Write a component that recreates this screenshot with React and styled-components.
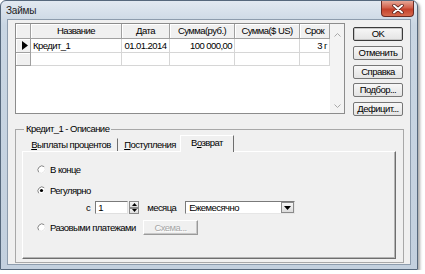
import React from "react";
import styled, { createGlobalStyle } from "styled-components";

const GlobalStyle = createGlobalStyle`
  body {
    margin: 0;
    background: #ffffff;
    font-family: "Liberation Sans", Arial, sans-serif;
    font-size: 9.5px;
    letter-spacing: -0.55px;
    color: #000;
  }
`;

const columns = [
  { title: "", width: 15 },
  { title: "Название", width: 91 },
  { title: "Дата", width: 48 },
  { title: "Сумма(руб.)", width: 65 },
  { title: "Сумма($ US)", width: 65 },
  { title: "Срок", width: 30 },
];
const template = columns.map((c) => c.width + "px").join(" ");

const rows = [
  { cells: ["Кредит_1", "01.01.2014", "100 000,00", "", "3 г"], current: true, height: 14 },
  { cells: ["", "", "", "", ""], current: false, height: 13 },
];
const aligns = ["left", "center", "right", "right", "right"];

const LoanDialog = () => {
  return (
    <Window>
      <TitleBar>
        <Title>Займы</Title>
        <CloseButton>
          <svg width="12" height="10" viewBox="0 0 12 10">
            <path d="M2 1.5 L10 8.5 M10 1.5 L2 8.5" stroke="#4a1410" strokeWidth="3.4" strokeLinecap="round" />
            <path d="M2 1.5 L10 8.5 M10 1.5 L2 8.5" stroke="#ffffff" strokeWidth="2" strokeLinecap="round" />
          </svg>
        </CloseButton>
      </TitleBar>

      <Client>
        <TopRow>
          <Grid>
            <Table>
              <HeadRow>
                {columns.map((c, i) => (
                  <HeadCell key={i}>{c.title}</HeadCell>
                ))}
              </HeadRow>
              {rows.map((r, i) => (
                <DataRow key={i} $height={r.height}>
                  <Indicator>
                    {r.current && (
                      <svg width="6" height="9" viewBox="0 0 6 9">
                        <path d="M0 0 L6 4.5 L0 9 Z" fill="#000" />
                      </svg>
                    )}
                  </Indicator>
                  {r.cells.map((t, j) => (
                    <Cell key={j} $align={aligns[j]}>{t}</Cell>
                  ))}
                </DataRow>
              ))}
            </Table>
            <ScrollTrack>
              <svg width="7" height="4" viewBox="0 0 7 4">
                <path d="M0.5 3.5 L3.5 0.5 L6.5 3.5" fill="none" stroke="#a8a8a8" />
              </svg>
              <svg width="7" height="4" viewBox="0 0 7 4">
                <path d="M0.5 0.5 L3.5 3.5 L6.5 0.5" fill="none" stroke="#a8a8a8" />
              </svg>
            </ScrollTrack>
          </Grid>

          <ButtonColumn>
            <Button $default>OK</Button>
            <Button>Отменить</Button>
            <Button>Справка</Button>
            <Button>Подбор...</Button>
            <Button>Дефицит...</Button>
          </ButtonColumn>
        </TopRow>

        <GroupBox>
          <Legend>Кредит_1 - Описание</Legend>
          <TabStrip>
            <Tab $width={94} $separator>
              <u>В</u>ыплаты процентов
            </Tab>
            <Tab $width={64}>
              <u>П</u>оступления
            </Tab>
            <Tab $width={54} $active>
              В<u>о</u>зврат
            </Tab>
          </TabStrip>

          <TabPanel>
            <RadioRow>
              <Radio />
              <span>В конце</span>
            </RadioRow>
            <RadioRow $top={9}>
              <Radio checked />
              <span>Регулярно</span>
            </RadioRow>
            <PeriodRow>
              <span>с</span>
              <SpinBox>
                <Edit>1</Edit>
                <SpinButtons>
                  <SpinHalf>
                    <svg width="5" height="3" viewBox="0 0 5 3">
                      <path d="M0 3 L2.5 0 L5 3 Z" fill="#000" />
                    </svg>
                  </SpinHalf>
                  <SpinHalf>
                    <svg width="5" height="3" viewBox="0 0 5 3">
                      <path d="M0 0 L2.5 3 L5 0 Z" fill="#000" />
                    </svg>
                  </SpinHalf>
                </SpinButtons>
              </SpinBox>
              <MonthLabel>месяца</MonthLabel>
              <Combo>
                <ComboText>Ежемесячно</ComboText>
                <ComboButton>
                  <svg width="7" height="4" viewBox="0 0 7 4">
                    <path d="M0 0 L7 0 L3.5 4 Z" fill="#000" />
                  </svg>
                </ComboButton>
              </Combo>
            </PeriodRow>
            <RadioRow $top={7}>
              <Radio />
              <RadioText $width={89}>Разовыми платежами</RadioText>
              <DisabledButton>Схема...</DisabledButton>
            </RadioRow>
          </TabPanel>
        </GroupBox>
      </Client>
    </Window>
  );
};

const Radio = ({ checked }) => (
  <RadioMark width="9" height="9" viewBox="0 0 9 9">
    <circle cx="4.5" cy="4.5" r="4" fill="#ffffff" />
    <path d="M1.7 7.3 A4 4 0 0 1 7.3 1.7" fill="none" stroke="#808080" strokeWidth="1" />
    <path d="M7.3 1.7 A4 4 0 0 1 1.7 7.3" fill="none" stroke="#e6e6e6" strokeWidth="1" />
    {checked && <circle cx="4.5" cy="4.5" r="1.6" fill="#000" />}
  </RadioMark>
);

export default function App() {
  return (
    <>
      <GlobalStyle />
      <LoanDialog />
    </>
  );
}

const Window = styled.div`
  width: 418px;
  height: 270px;
  box-sizing: border-box;
  border: 1px solid #56687c;
  border-radius: 6px 6px 0 0;
  background: linear-gradient(#e2e9f1, #c9d6e3 24px, #c3d0de);
  box-shadow: 2px 2px 3px rgba(0, 0, 0, 0.35);
  display: flex;
  flex-direction: column;
`;

const TitleBar = styled.div`
  height: 18px;
  display: flex;
  justify-content: space-between;
  align-items: flex-start;
  padding-left: 5px;
`;

const Title = styled.span`
  font-size: 10px;
  letter-spacing: -0.2px;
  line-height: 19px;
  color: #1c1c1c;
`;

const CloseButton = styled.div`
  width: 33px;
  height: 16px;
  margin-right: 3px;
  box-sizing: border-box;
  border: 1px solid #6a2a22;
  border-top: none;
  border-radius: 0 0 4px 4px;
  background: linear-gradient(#e7a797, #d2604a 45%, #c4412b 55%, #d66a4e);
  display: flex;
  align-items: center;
  justify-content: center;
`;

const Client = styled.div`
  flex: 1;
  margin: 0 6px 4px 6px;
  border: 1px solid #8d9cad;
  background: #f0f0f0;
  padding: 3px 6px 1px 7px;
  display: flex;
  flex-direction: column;
`;

const TopRow = styled.div`
  display: flex;
  align-items: flex-start;
  gap: 8px;
`;

const Grid = styled.div`
  width: 330px;
  height: 91px;
  box-sizing: border-box;
  border: 1px solid #8c8c8c;
  background: #ffffff;
  display: flex;
`;

const Table = styled.div`
  display: flex;
  flex-direction: column;
`;

const HeadRow = styled.div`
  display: grid;
  grid-template-columns: ${template};
  height: 15px;
`;

const HeadCell = styled.div`
  box-sizing: border-box;
  background: #f0f0f0;
  border-right: 1px solid #a0a0a0;
  border-bottom: 1px solid #a0a0a0;
  box-shadow: inset 1px 1px 0 #ffffff;
  text-align: center;
  line-height: 14px;
  white-space: nowrap;
  overflow: hidden;
`;

const DataRow = styled.div`
  display: grid;
  grid-template-columns: ${template};
  height: ${(p) => p.$height}px;
`;

const Indicator = styled.div`
  box-sizing: border-box;
  background: #f0f0f0;
  border-right: 1px solid #a0a0a0;
  border-bottom: 1px solid #a0a0a0;
  box-shadow: inset 1px 1px 0 #ffffff;
  display: flex;
  align-items: center;
  padding-left: 6px;
`;

const Cell = styled.div`
  box-sizing: border-box;
  border-right: 1px solid #d6d6d6;
  border-bottom: 1px solid #d6d6d6;
  text-align: ${(p) => p.$align};
  padding: 0 2px;
  line-height: 13px;
  white-space: nowrap;
  overflow: hidden;
`;

const ScrollTrack = styled.div`
  flex: 1;
  background: #f3f3f3;
  display: flex;
  flex-direction: column;
  justify-content: space-between;
  align-items: center;
  padding: 9px 0 5px;
`;

const ButtonColumn = styled.div`
  width: 50px;
  margin-top: 4px;
  display: flex;
  flex-direction: column;
  gap: 4.75px;
`;

const Button = styled.div`
  height: 14px;
  box-sizing: border-box;
  border: 1px solid ${(p) => (p.$default ? "#3a3a3a" : "#767676")};
  box-shadow: ${(p) => (p.$default ? "inset 0 0 0 1px #c8c8c8" : "none")};
  border-radius: 2px;
  background: linear-gradient(#f7f7f7, #e4e4e4);
  text-align: center;
  line-height: 12px;
  white-space: nowrap;
`;

const GroupBox = styled.fieldset`
  margin: 7px 0 0 0;
  padding: 0 7px 3px 6px;
  min-width: 0;
  flex: 1;
  border: 1px solid #a8a8a8;
  display: flex;
  flex-direction: column;
`;

const Legend = styled.legend`
  padding: 0 2px;
  margin-left: 2px;
  line-height: 12px;
`;

const TabStrip = styled.div`
  height: 16px;
  display: flex;
  align-items: flex-end;
  padding-left: 2px;
`;

const Tab = styled.div`
  width: ${(p) => p.$width}px;
  height: ${(p) => (p.$active ? 17 : 13)}px;
  box-sizing: border-box;
  margin-bottom: ${(p) => (p.$active ? -1 : 0)}px;
  margin-left: ${(p) => (p.$active ? -2 : 0)}px;
  border-right: 1px solid ${(p) => (p.$active || p.$separator ? "#6e6e6e" : "transparent")};
  border-top: 1px solid ${(p) => (p.$active ? "#ffffff" : "transparent")};
  border-left: 1px solid ${(p) => (p.$active ? "#ffffff" : "transparent")};
  background: #f0f0f0;
  text-align: center;
  line-height: ${(p) => (p.$active ? 13 : 12)}px;
  white-space: nowrap;
  position: relative;
  z-index: ${(p) => (p.$active ? 1 : 0)};
`;

const TabPanel = styled.div`
  flex: 1;
  box-sizing: border-box;
  border: 1px solid;
  border-color: #ffffff #6e6e6e #6e6e6e #ffffff;
  box-shadow: inset -1px -1px 0 #b4b4b4;
  padding: 11px 0 0 14px;
  display: flex;
  flex-direction: column;
`;

const RadioRow = styled.div`
  display: flex;
  align-items: center;
  height: 12px;
  margin-top: ${(p) => p.$top || 0}px;
  white-space: nowrap;
`;

const RadioMark = styled.svg`
  flex: none;
  margin-right: 4px;
`;

const RadioText = styled.span`
  width: ${(p) => p.$width}px;
`;

const PeriodRow = styled.div`
  display: flex;
  align-items: center;
  height: 13px;
  margin-top: 5px;
  padding-left: 49px;
`;

const SpinBox = styled.div`
  display: flex;
  margin-left: 5px;
  height: 13px;
`;

const Edit = styled.div`
  width: 33px;
  box-sizing: border-box;
  background: #ffffff;
  border: 1px solid;
  border-color: #7a7a7a #e0e0e0 #e0e0e0 #7a7a7a;
  padding-left: 2px;
  line-height: 11px;
`;

const SpinButtons = styled.div`
  width: 10px;
  display: flex;
  flex-direction: column;
  margin-left: 1px;
`;

const SpinHalf = styled.div`
  flex: 1;
  box-sizing: border-box;
  border: 1px solid #8a8a8a;
  background: linear-gradient(#f6f6f6, #dcdcdc);
  display: flex;
  align-items: center;
  justify-content: center;
`;

const MonthLabel = styled.span`
  width: 38px;
  margin-left: 8px;
`;

const Combo = styled.div`
  width: 110px;
  height: 13px;
  box-sizing: border-box;
  background: #ffffff;
  border: 1px solid;
  border-color: #7a7a7a #e6e6e6 #e6e6e6 #7a7a7a;
  display: flex;
`;

const ComboText = styled.span`
  flex: 1;
  padding-left: 3px;
  line-height: 11px;
`;

const ComboButton = styled.div`
  width: 13px;
  box-sizing: border-box;
  border: 1px solid #8a8a8a;
  background: linear-gradient(#f6f6f6, #dcdcdc);
  display: flex;
  align-items: center;
  justify-content: center;
`;

const DisabledButton = styled.div`
  width: 55px;
  height: 15px;
  margin-left: 4px;
  box-sizing: border-box;
  border: 1px solid;
  border-color: #ffffff #9a9a9a #9a9a9a #ffffff;
  box-shadow: inset -1px -1px 0 #c8c8c8;
  background: #f0f0f0;
  color: #a6a6a6;
  text-shadow: 1px 1px 0 #ffffff;
  text-align: center;
  line-height: 13px;
`;
